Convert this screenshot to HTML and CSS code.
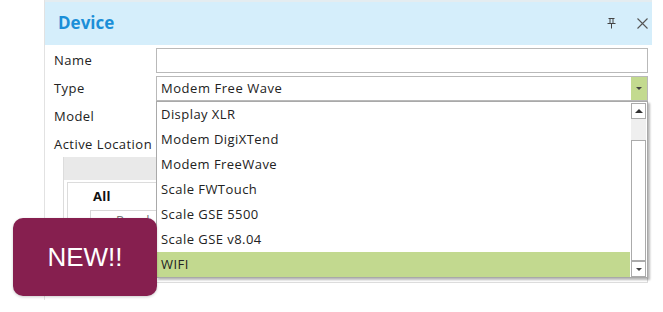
FILE: index.html
```html
<!DOCTYPE html>
<html>
<head>
<meta charset="utf-8">
<link rel="stylesheet" href="styles.css">
</head>
<body>
<div class="page">
  <div class="panel">
    <div class="header">
      <div class="title">Device</div>
      <div class="actions">
        <svg class="pin" width="9" height="11" viewBox="0 0 9 11"><path d="M1.5 0.5h6M3 0.5v5M6 0.5v5M0.5 5.5h8M4.5 5.5v5" stroke="#444" stroke-width="1" fill="none"/></svg>
        <svg class="close" width="11" height="11" viewBox="0 0 11 11"><path d="M0.5 0.5l10 10M10.5 0.5l-10 10" stroke="#555" stroke-width="1.1" fill="none"/></svg>
      </div>
    </div>
    <div class="body">
      <div class="form">
        <label class="lbl">Name</label>
        <div class="input"></div>
        <label class="lbl">Type</label>
        <div class="input select">
          <span class="val">Modem Free Wave</span>
          <span class="dd-btn"><span class="tri-down"></span></span>
        </div>
        <label class="lbl">Model</label>
        <div class="empty"></div>
        <label class="lbl">Active Location</label>
        <div class="empty"></div>
      </div>
      <div class="grid">
        <div class="grid-head"></div>
        <div class="grid-box">
          <div class="all">All</div>
          <div class="sub">Panel</div>
        </div>
      </div>
    </div>
  </div>

  <div class="list">
    <div class="items">
      <div class="item">Display XLR</div>
      <div class="item">Modem DigiXTend</div>
      <div class="item">Modem FreeWave</div>
      <div class="item">Scale FWTouch</div>
      <div class="item">Scale GSE 5500</div>
      <div class="item">Scale GSE v8.04</div>
      <div class="item sel">WIFI</div>
    </div>
    <div class="scroll">
      <div class="sbtn"><span class="tri-up"></span></div>
      <div class="track"></div>
      <div class="thumb"></div>
      <div class="sbtn"><span class="tri-down"></span></div>
    </div>
  </div>

  <div class="badge">NEW!!</div>
</div>
</body>
</html>
```

FILE: styles.css
```css
* { box-sizing: border-box; }
html, body { margin: 0; padding: 0; background: #fff; }
body {
  font-family: "Open Sans", "Noto Sans", sans-serif;
  font-size: 13px;
  color: #222;
  width: 663px;
  height: 312px;
  overflow: hidden;
}
.page { position: relative; width: 663px; height: 312px; }

.panel {
  margin-left: 44px;
  width: 608px;
  height: 300px;
  border-left: 1px solid #e2e2e2;
}
.header {
  height: 45px;
  background: #d5eefb;
  border-top: 2px solid #e4ecf0;
  display: flex;
  align-items: center;
  justify-content: space-between;
  padding: 0 4px 0 13px;
}
.title {
  font-family: "Open Sans", sans-serif;
  font-weight: 700;
  font-size: 17px;
  color: #1b8fd8;
  margin-top: -2px;
}
.actions { display: flex; align-items: center; gap: 21px; margin-top: -1px; }
.pin { display: block; }
.close { display: block; }

.body { padding: 3px 4px 0 9px; }
.form {
  display: grid;
  grid-template-columns: 102px 1fr;
  grid-auto-rows: 25px;
  row-gap: 3px;
}
.lbl {
  display: flex; align-items: center;
  font-size: 13px; color: #222;
  letter-spacing: 0.45px;
  padding-bottom: 2px;
}
.input {
  border: 1px solid #b9b9b9;
  background: #fff;
  position: relative;
}
.select { display: flex; align-items: center; padding-bottom: 2px; }
.val { padding-left: 4px; font-size: 13px; color: #222; letter-spacing: 0.55px; }
.dd-btn {
  position: absolute;
  right: 0; top: 0; bottom: 0;
  width: 16px;
  background: #c3da8f;
  display: flex; align-items: center; justify-content: center;
}
.tri-down {
  width: 0; height: 0;
  border-left: 3px solid transparent;
  border-right: 3px solid transparent;
  border-top: 3px solid #444;
}
.tri-up {
  width: 0; height: 0;
  border-left: 4px solid transparent;
  border-right: 4px solid transparent;
  border-bottom: 4px solid #333;
}

.grid {
  margin-left: 9px;
  border-left: 1px solid #dcdcdc;
}
.grid-head { height: 23px; background: #e9e9e9; }
.grid-box {
  margin: 2px 0 0 3px;
  border: 1px solid #dcdcdc;
  height: 101px;
}
.all { font-weight: 700; font-size: 13px; padding: 4px 0 0 25px; height: 27px; color: #111; letter-spacing: 0.3px; }
.sub {
  margin-left: 22px;
  border: 1px solid #d8d8d8;
  height: 40px;
  padding: 2px 0 0 25px;
  color: #777;
  font-size: 13px;
  line-height: 14px;
}

.list {
  position: absolute;
  left: 156px;
  top: 101px;
  width: 492px;
  height: 177px;
  background: #fff;
  border: 1px solid #a9a9a9;
  box-shadow: 2px 2px 2px rgba(0,0,0,0.28);
  display: flex;
}
.items { flex: 1; display: flex; flex-direction: column; }
.item {
  height: 25px;
  display: flex; align-items: center;
  padding-left: 4px;
  padding-bottom: 2px;
  font-size: 13px;
  color: #222;
  letter-spacing: 0.45px;
}
.item.sel { background: #c2d98f; }
.scroll {
  width: 17px;
  display: flex; flex-direction: column;
  padding: 1px 1px 0 1px;
}
.sbtn {
  height: 16px;
  border: 1px solid #ababab;
  background: #fff;
  display: flex; align-items: center; justify-content: center;
}
.track { height: 21px; background: #efefef; }
.thumb { flex: 1; border: 1px solid #ababab; background: #fff; }

.badge {
  position: absolute;
  left: 13px;
  top: 218px;
  width: 144px;
  height: 78px;
  background: #861f4f;
  border-radius: 10px;
  box-shadow: 0 1px 3px rgba(0,0,0,0.2);
  color: #fff;
  font-family: "Liberation Sans", Arial, sans-serif;
  font-size: 26px;
  display: flex; align-items: center; justify-content: center;
}
```
